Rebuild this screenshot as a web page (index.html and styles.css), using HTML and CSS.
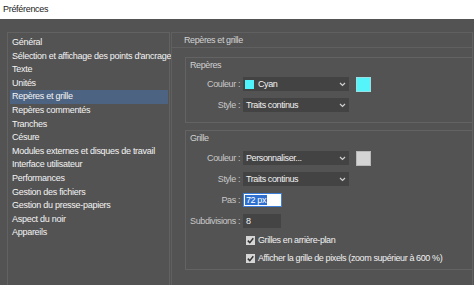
FILE: index.html
```html
<!DOCTYPE html>
<html lang="fr">
<head>
<meta charset="utf-8">
<title>Préférences</title>
<link rel="stylesheet" href="styles.css">
</head>
<body>
<div class="titlebar">Préférences</div>
<div class="content">
  <ul class="nav">
    <li>Général</li>
    <li>Sélection et affichage des points d'ancrage</li>
    <li>Texte</li>
    <li>Unités</li>
    <li class="active">Repères et grille</li>
    <li>Repères commentés</li>
    <li>Tranches</li>
    <li>Césure</li>
    <li>Modules externes et disques de travail</li>
    <li>Interface utilisateur</li>
    <li>Performances</li>
    <li>Gestion des fichiers</li>
    <li>Gestion du presse-papiers</li>
    <li>Aspect du noir</li>
    <li>Appareils</li>
  </ul>
  <div class="main">
    <div class="main-head">Repères et grille</div>
    <div class="group g1">
      <div class="legend">Repères</div>
      <div class="row">
        <span class="label">Couleur :</span>
        <div class="select"><span class="chip cyan"></span><span class="val">Cyan</span><span class="chev"><svg width="7" height="5" viewBox="0 0 7 5"><path d="M1 1 L3.5 3.5 L6 1" fill="none" stroke="#d0d0d0" stroke-width="1.2"/></svg></span></div>
        <span class="swatch cyan"></span>
      </div>
      <div class="row">
        <span class="label">Style :</span>
        <div class="select"><span class="val">Traits continus</span><span class="chev"><svg width="7" height="5" viewBox="0 0 7 5"><path d="M1 1 L3.5 3.5 L6 1" fill="none" stroke="#d0d0d0" stroke-width="1.2"/></svg></span></div>
      </div>
    </div>
    <div class="group g2">
      <div class="legend">Grille</div>
      <div class="row">
        <span class="label">Couleur :</span>
        <div class="select"><span class="val">Personnaliser...</span><span class="chev"><svg width="7" height="5" viewBox="0 0 7 5"><path d="M1 1 L3.5 3.5 L6 1" fill="none" stroke="#d0d0d0" stroke-width="1.2"/></svg></span></div>
        <span class="swatch grey"></span>
      </div>
      <div class="row">
        <span class="label">Style :</span>
        <div class="select"><span class="val">Traits continus</span><span class="chev"><svg width="7" height="5" viewBox="0 0 7 5"><path d="M1 1 L3.5 3.5 L6 1" fill="none" stroke="#d0d0d0" stroke-width="1.2"/></svg></span></div>
      </div>
      <div class="row">
        <span class="label">Pas :</span>
        <div class="input active"><span class="sel">72 px</span></div>
      </div>
      <div class="row">
        <span class="label">Subdivisions :</span>
        <div class="input">8</div>
      </div>
      <div class="check first">
        <span class="box"><svg width="9" height="9" viewBox="0 0 9 9"><path d="M1.8 4.6 L3.8 6.6 L7.3 2.3" fill="none" stroke="#333" stroke-width="1.5"/></svg></span>
        <span>Grilles en arrière-plan</span>
      </div>
      <div class="check">
        <span class="box"><svg width="9" height="9" viewBox="0 0 9 9"><path d="M1.8 4.6 L3.8 6.6 L7.3 2.3" fill="none" stroke="#333" stroke-width="1.5"/></svg></span>
        <span>Afficher la grille de pixels (zoom supérieur à 600 %)</span>
      </div>
    </div>
  </div>
</div>
</body>
</html>
```

FILE: styles.css
```css
* { box-sizing: border-box; }
html, body { margin: 0; padding: 0; }
body {
  width: 474px;
  height: 285px;
  overflow: hidden;
  font-family: "Liberation Sans", Arial, sans-serif;
  font-size: 9px;
  letter-spacing: -0.4px;
  background: #535353;
}
.titlebar {
  height: 19px;
  background: #ffffff;
  color: #222;
  line-height: 18px;
  padding-left: 3px;
  font-size: 9px;
  letter-spacing: -0.3px;
}
.content {
  display: flex;
  align-items: flex-start;
  height: 266px;
  background: #535353;
  overflow: hidden;
}
.nav {
  list-style: none;
  margin: 13px 0 0 7px;
  padding: 3px 1px 0 2px;
  width: 163px;
  height: 300px;
  border: 1px solid #626262;
  flex: none;
  letter-spacing: -0.28px;
}
.nav li {
  height: 13.6px;
  line-height: 13.6px;
  padding-left: 2px;
  color: #f4f4f4;
  white-space: nowrap;
}
.nav li.active {
  background: #4c6482;
}
.main {
  margin: 13px 0 0 1px;
  width: 302px;
  height: 300px;
  border: 1px solid #606060;
  border-right-color: #626262;
  flex: none;
}
.main-head {
  height: 15px;
  line-height: 15px;
  padding-left: 12px;
  color: #d2d2d2;
  border-bottom: 1px solid #606060;
}
.group {
  margin-left: 13px;
  border: 1px solid #636363;
  border-right: none;
  padding-left: 4px;
}
.g1 { margin-top: 9px; padding-bottom: 10px; }
.g2 { margin-top: 7px; padding-bottom: 6px; }
.legend {
  height: 13px;
  line-height: 14px;
  color: #d0d0d0;
}
.row {
  display: flex;
  align-items: center;
  height: 14px;
  margin-top: 7px;
}
.g1 .legend + .row { margin-top: 6px; }
.g2 .legend { line-height: 15px; }
.g2 .legend + .row { margin-top: 7px; }
.label {
  width: 53px;
  text-align: right;
  color: #c8c8c8;
  padding-right: 3px;
  flex: none;
  white-space: nowrap;
}
.select {
  width: 106px;
  height: 14px;
  background: #434343;
  display: flex;
  align-items: center;
  padding-left: 3px;
  color: #f2f2f2;
  flex: none;
}
.select .val { flex: 1; }
.chev { width: 10px; display: flex; align-items: center; }
.chip {
  width: 9px;
  height: 9px;
  margin-right: 4px;
  margin-left: -1px;
}
.cyan { background: #4ff3fb; }
.swatch {
  width: 15px;
  height: 15px;
  margin-left: 7px;
  border: 1px solid #a8a8a8;
  flex: none;
}
.swatch.cyan { background: #55f4fb; border-color: #9adfe2; }
.swatch.grey { background: #d4d4d4; border-color: #b8b8b8; }
.input {
  width: 38px;
  height: 14px;
  background: #444444;
  color: #f0f0f0;
  padding-left: 3px;
  line-height: 14px;
  flex: none;
}
.input.active {
  width: 39px;
  background: #ffffff;
  border: 1px solid #3d7fd8;
  line-height: 12px;
  padding-left: 1px;
}
.sel {
  background: #2f6fd0;
  color: #ffffff;
  padding: 0 1px;
}
.check {
  display: flex;
  align-items: center;
  height: 10px;
  margin-left: 56px;
  margin-top: 8px;
  color: #f0f0f0;
  white-space: nowrap;
}
.check.first { margin-top: 7px; }
.box {
  width: 9px;
  height: 9px;
  background: #d6d6d6;
  margin-right: 3px;
  display: flex;
  flex: none;
}
```
